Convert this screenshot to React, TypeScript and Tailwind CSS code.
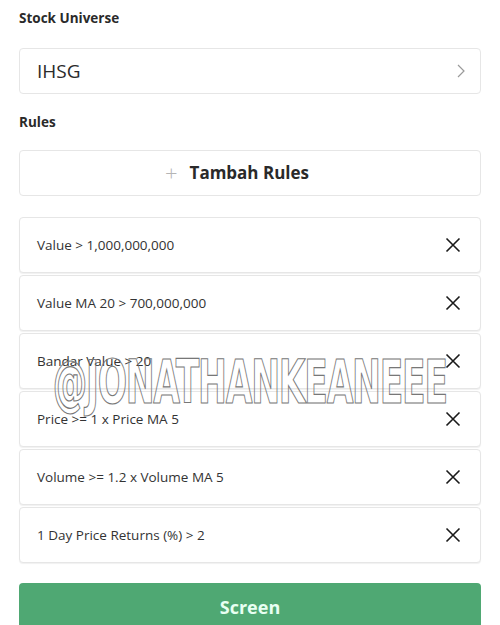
import React from "react";

const rules = [
  "Value > 1,000,000,000",
  "Value MA 20 > 700,000,000",
  "Bandar Value > 20",
  "Price >= 1 x Price MA 5",
  "Volume >= 1.2 x Volume MA 5",
  "1 Day Price Returns (%) > 2",
];

const CloseIcon = () => (
  <svg className="w-[16px] h-[16px] text-[#1a1a1a]" viewBox="0 0 16 16" fill="none" stroke="currentColor" strokeWidth={1.6}>
    <path d="M1.5 1.5l13 13M14.5 1.5l-13 13" />
  </svg>
);

const RuleRow: React.FC<{ label: string }> = ({ label }) => (
  <div className="h-[56px] flex items-center justify-between pl-[17px] pr-[19px] bg-white border border-[#e6e6e6] rounded-[4px] shadow-[0_1px_1px_rgba(0,0,0,0.06)]">
    <span className="text-[13.5px] text-[#333]">{label}</span>
    <CloseIcon />
  </div>
);

export default function App() {
  return (
    <div className="relative w-[500px] h-[625px] overflow-hidden bg-white px-[19px] pt-[9px] font-['Open_Sans',sans-serif]">
      {/* Stock universe */}
      <h2 className="text-[13.5px] font-bold text-[#2a2a2a] leading-[18px]">Stock Universe</h2>
      <div className="mt-[21px] h-[46px] flex items-center justify-between pl-[17px] pr-[14px] border border-[#e6e6e6] rounded-[4px]">
        <span className="text-[19px] text-[#2a2a2a]">IHSG</span>
        <svg className="w-[10px] h-[16px] text-[#9a9a9a]" viewBox="0 0 10 16" fill="none" stroke="currentColor" strokeWidth={1.2}>
          <path d="M2 2l6 6-6 6" />
        </svg>
      </div>

      {/* Rules */}
      <h2 className="mt-[19px] text-[13.5px] font-bold text-[#2a2a2a] leading-[18px]">Rules</h2>
      <button className="mt-[19px] w-full h-[46px] flex items-center justify-center gap-[12px] pr-[26px] border border-[#e6e6e6] rounded-[4px] bg-white">
        <span className="text-[22px] font-light text-[#b5b5b5] leading-none -mt-[2px]">+</span>
        <span className="text-[17px] font-bold text-[#2a2a2a]">Tambah Rules</span>
      </button>

      <div className="mt-[21px] flex flex-col gap-[2px]">
        {rules.map((r) => (
          <RuleRow key={r} label={r} />
        ))}
      </div>

      <button className="mt-[20px] w-full h-[48px] rounded-[4px] bg-[#4fa873] text-[#e8fff2] text-[18px] font-bold flex items-start justify-center pt-[11px]">
        Screen
      </button>

      {/* Watermark */}
      <div className="absolute left-0 right-0 top-[352px] flex justify-center pointer-events-none">
        <span className="shrink-0 whitespace-nowrap font-['DejaVu_Sans_Condensed',sans-serif] text-[60px] font-bold tracking-[-2px] text-transparent [-webkit-text-stroke:1.2px_#777] leading-none scale-x-[0.64] inline-block">
          @JONATHANKEANEEE
        </span>
      </div>
    </div>
  );
}
